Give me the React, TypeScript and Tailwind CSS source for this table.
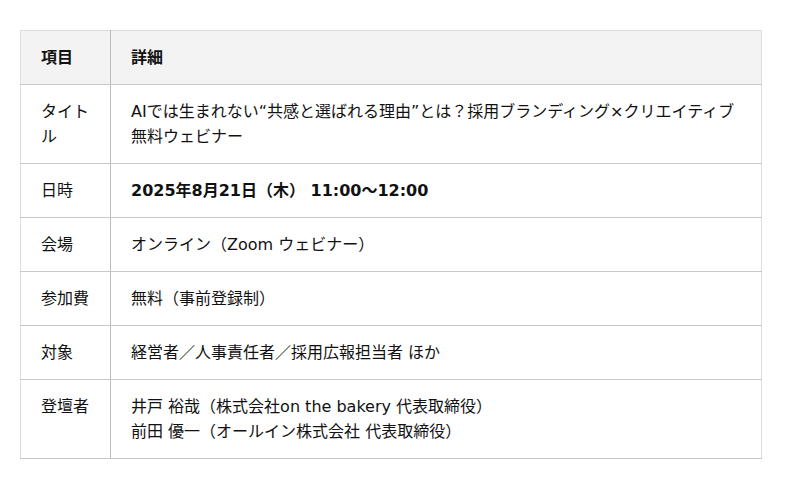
const rows: { label: string; lines: string[]; bold?: boolean }[] = [
  {
    label: "タイトル",
    lines: ["AIでは生まれない“共感と選ばれる理由”とは？採用ブランディング×クリエイティブ無料ウェビナー"],
  },
  { label: "日時", lines: ["2025年8月21日（木） 11:00〜12:00"], bold: true },
  { label: "会場", lines: ["オンライン（Zoom ウェビナー）"] },
  { label: "参加費", lines: ["無料（事前登録制）"] },
  { label: "対象", lines: ["経営者／人事責任者／採用広報担当者 ほか"] },
  {
    label: "登壇者",
    lines: ["井戸 裕哉（株式会社on the bakery 代表取締役）", "前田 優一（オールイン株式会社 代表取締役）"],
  },
];

export default function App() {
  return (
    <div
      className="bg-white px-5 pt-[30px] pb-8 text-[16px] leading-[25px] text-[#111]"
      style={{ fontFamily: '"DejaVu Sans", "Noto Sans CJK JP", sans-serif' }}
    >
      <table className="w-[742px] border-collapse border border-[#ddd]">
        <thead>
          <tr className="bg-[#f3f3f3]">
            <th className="w-[90px] border-b border-r border-b-[#c8c8c8] border-r-[#bbb] px-5 py-[14px] text-left font-bold">
              項目
            </th>
            <th className="border-b border-[#c8c8c8] px-5 py-[14px] text-left font-bold">詳細</th>
          </tr>
        </thead>
        <tbody>
          {rows.map((r) => (
            <tr key={r.label}>
              <td className="w-[90px] border-b border-r border-b-[#c8c8c8] border-r-[#bbb] px-5 py-[14px] align-top">
                {r.label}
              </td>
              <td
                className={`border-b border-[#c8c8c8] px-5 py-[14px] align-top ${
                  r.bold ? "font-bold" : ""
                }`}
              >
                {r.lines.map((l) => (
                  <div key={l}>{l}</div>
                ))}
              </td>
            </tr>
          ))}
        </tbody>
      </table>
    </div>
  );
}
